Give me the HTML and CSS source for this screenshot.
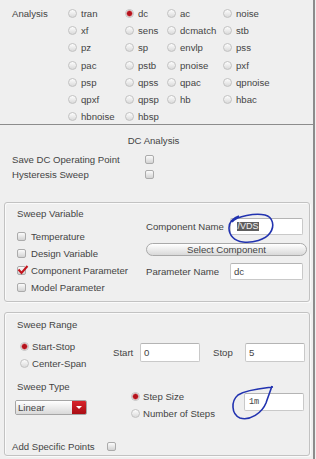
FILE: index.html
```html
<!DOCTYPE html>
<html>
<head>
<meta charset="utf-8">
<link rel="stylesheet" href="styles.css">
</head>
<body>
<div class="frame">
  <section class="analysis">
    <div class="an-label">Analysis</div>
    <label class="opt"><span class="radio"></span>tran</label>
    <label class="opt"><span class="radio on"></span>dc</label>
    <label class="opt"><span class="radio"></span>ac</label>
    <label class="opt"><span class="radio"></span>noise</label>
    <label class="opt"><span class="radio"></span>xf</label>
    <label class="opt"><span class="radio"></span>sens</label>
    <label class="opt"><span class="radio"></span>dcmatch</label>
    <label class="opt"><span class="radio"></span>stb</label>
    <label class="opt"><span class="radio"></span>pz</label>
    <label class="opt"><span class="radio"></span>sp</label>
    <label class="opt"><span class="radio"></span>envlp</label>
    <label class="opt"><span class="radio"></span>pss</label>
    <label class="opt"><span class="radio"></span>pac</label>
    <label class="opt"><span class="radio"></span>pstb</label>
    <label class="opt"><span class="radio"></span>pnoise</label>
    <label class="opt"><span class="radio"></span>pxf</label>
    <label class="opt"><span class="radio"></span>psp</label>
    <label class="opt"><span class="radio"></span>qpss</label>
    <label class="opt"><span class="radio"></span>qpac</label>
    <label class="opt"><span class="radio"></span>qpnoise</label>
    <label class="opt"><span class="radio"></span>qpxf</label>
    <label class="opt"><span class="radio"></span>qpsp</label>
    <label class="opt"><span class="radio"></span>hb</label>
    <label class="opt"><span class="radio"></span>hbac</label>
    <label class="opt"><span class="radio"></span>hbnoise</label>
    <label class="opt"><span class="radio"></span>hbsp</label>
  </section>
  <div class="sep"></div>

  <section class="dc">
    <div class="dc-title">DC Analysis</div>
    <div class="dc-opts">
      <span>Save DC Operating Point</span><span class="check"></span>
      <span>Hysteresis Sweep</span><span class="check"></span>
    </div>
  </section>

  <section class="group sv">
    <div class="sv-left">
      <div class="g-title">Sweep Variable</div>
      <div class="checks">
        <div class="crow"><span class="check"></span>Temperature</div>
        <div class="crow"><span class="check"></span>Design Variable</div>
        <div class="crow"><span class="check on"><svg class="tick" width="12" height="10" viewBox="0 0 12 10"><path d="M1.5 4.5 L4.5 8 L10.5 1" fill="none" stroke="#c3141d" stroke-width="2"/></svg></span>Component Parameter</div>
        <div class="crow"><span class="check"></span>Model Parameter</div>
      </div>
    </div>
    <div class="sv-right">
      <div class="frow">
        <span class="flabel">Component Name</span>
        <div class="input wide"><span class="sel">/VDS</span></div>
      </div>
      <div class="button">Select Component</div>
      <div class="frow param">
        <span class="flabel">Parameter Name</span>
        <div class="input wide">dc</div>
      </div>
    </div>
  </section>

  <section class="group sr">
    <div class="g-title">Sweep Range</div>
    <div class="sr-row">
      <div class="sr-radios">
        <div class="rrow"><span class="radio on"></span>Start-Stop</div>
        <div class="rrow"><span class="radio"></span>Center-Span</div>
      </div>
      <div class="range">
        <span class="lbl-start">Start</span>
        <div class="input sm">0</div>
        <span class="lbl-stop">Stop</span>
        <div class="input sm">5</div>
      </div>
    </div>
    <div class="st-row">
      <div class="st-left">
        <div class="g-title">Sweep Type</div>
        <div class="dd"><span class="dd-text">Linear</span><span class="dd-btn"></span></div>
      </div>
      <div class="st-radios">
        <div class="rrow"><span class="radio on"></span>Step Size</div>
        <div class="rrow"><span class="radio"></span>Number of Steps</div>
      </div>
      <div class="input step"><span class="mono">1m</span></div>
    </div>
    <div class="asp">
      <span>Add Specific Points</span><span class="check"></span>
    </div>
  </section>

  <svg class="marks" width="316" height="459" viewBox="0 0 316 459">
    <path d="M232 222 C237 216, 255 213, 265 215 C273 217, 275 226, 270 233 C265 240, 253 243, 243 242 C234 241, 229 235, 229 228 C229 222, 233 218, 239 216" fill="none" stroke="#2233b0" stroke-width="1.6"/>
    <path d="M273 387 C266 388, 248 389, 238 395 C231 401, 231 414, 240 418 C250 421, 262 413, 266 403 C268 397, 270 392, 272 386" fill="none" stroke="#2233b0" stroke-width="1.6"/>
  </svg>
</div>
</body>
</html>
```

FILE: styles.css
```css
* { box-sizing: border-box; margin: 0; padding: 0; }
html, body { width: 316px; height: 459px; overflow: hidden; }
body {
  background: #efefef;
  font-family: "Liberation Sans", Arial, sans-serif;
  font-size: 9.6px;
  color: #444444;
}
.frame {
  position: relative;
  width: 315px;
  height: 459px;
  border-right: 2px solid #8c8c8c;
}

/* Analysis radio grid */
.analysis {
  height: 124px;
  padding: 4.5px 0 0 12px;
  display: grid;
  grid-template-columns: 56px 57px 42px 56px auto;
  grid-auto-rows: 17.3px;
}
.an-label { grid-row: span 7; line-height: 17.3px; align-self: start; }
.opt { display: flex; align-items: center; white-space: nowrap; }
.radio {
  flex: none;
  width: 9px;
  height: 9px;
  border-radius: 50%;
  border: 1px solid #c2c2c2;
  background: linear-gradient(#fdfdfd, #dadada);
  margin-right: 4px;
}
.radio.on {
  background: radial-gradient(circle at 50% 50%, #b5121c 0, #b5121c 2px, #d77a7f 2.8px, #f4f4f4 3.6px);
}
.sep { border-top: 1px solid #8c8c8c; }

/* DC */
.dc { padding-top: 8px; }
.dc-title { text-align: center; padding-right: 6px; line-height: 15px; }
.dc-opts {
  margin-top: 3.5px;
  padding-left: 12px;
  display: grid;
  grid-template-columns: 133px 10px;
  grid-auto-rows: 15px;
  align-items: center;
}
.check {
  position: relative;
  flex: none;
  width: 9px;
  height: 9px;
  border: 1px solid #ababab;
  border-radius: 2px;
  background: linear-gradient(#fbfbfb, #d3d3d3);
}
.tick { position: absolute; left: -1px; top: -2px; }

/* group boxes */
.group {
  margin-left: 4px;
  width: 306px;
  border: 1px solid #c2c2c2;
  border-radius: 3px;
  box-shadow: inset 1px 1px 0 #fafafa, 1px 1px 0 #fafafa;
}
.g-title { line-height: 17px; }
.sv {
  margin-top: 20.5px;
  height: 100px;
  padding: 2px 0 0 12px;
  display: grid;
  grid-template-columns: 129px 1fr;
  align-items: start;
}
.checks { margin-top: 5.5px; }
.crow { display: flex; align-items: center; height: 17px; white-space: nowrap; }
.crow .check { margin-right: 5px; }
.sv-right { padding-top: 13px; }
.frow { display: flex; align-items: center; }
.flabel { width: 84px; white-space: nowrap; }
.input {
  background: #fff;
  border: 1px solid #c9c9c9;
  border-top-color: #b4b4b4;
  border-radius: 2px;
  padding-left: 3px;
  display: flex;
  align-items: center;
}
.input.wide { width: 73px; height: 17px; }
.sel { background: #5e5e5e; color: #f0f0f0; font-size: 9px; line-height: 9px; margin-left: 3px; padding: 0 0.5px; }
.button {
  margin-top: 8px;
  width: 161px;
  height: 13px;
  border: 1px solid #a9a9a9;
  border-radius: 7px;
  background: linear-gradient(#ffffff, #d9d9d9);
  display: flex;
  align-items: center;
  justify-content: center;
  line-height: 11px;
}
.frow.param { margin-top: 7px; }

.sr {
  margin-top: 10px;
  height: 144px;
  padding: 2.5px 0 0 12px;
}
.sr-row { margin-top: 5px; display: flex; align-items: flex-start; }
.sr-radios { width: 96px; }
.rrow { height: 17px; display: flex; align-items: center; white-space: nowrap; }
.sr-radios .radio { margin-left: 3px; margin-right: 3px; }
.range { margin-top: 5.5px; height: 19px; display: flex; align-items: center; }
.lbl-start { width: 27px; }
.lbl-stop { margin-left: 13px; width: 32px; }
.input.sm { width: 60px; height: 19px; }

.st-row { margin-top: 6px; display: flex; align-items: flex-start; }
.st-left { width: 114px; }
.dd {
  margin: 5.5px 0 0 -2px;
  width: 72px;
  height: 15px;
  display: flex;
  border: 1px solid #a5a5a5;
  border-radius: 2px;
  overflow: hidden;
}
.dd-text { flex: 1; background: linear-gradient(#ffffff, #d9d9d9); padding-left: 2px; line-height: 13px; }
.dd-btn {
  width: 14px;
  background: linear-gradient(#d8242b, #a90d14);
  display: flex;
  align-items: center;
  justify-content: center;
}
.dd-btn::before {
  content: "";
  border-left: 3px solid transparent;
  border-right: 3px solid transparent;
  border-top: 3px solid #fff;
}
.st-radios { margin-top: 10px; width: 113px; }
.st-radios .radio { margin-right: 3px; }
.input.step { margin-top: 15.5px; width: 60px; height: 18px; padding-left: 4px; }
.mono { font-family: "Liberation Mono", monospace; font-size: 8.5px; color: #444; }

.asp {
  margin: 16px 0 0 -5px;
  height: 17px;
  display: grid;
  grid-template-columns: 95px 9px;
  align-items: center;
}

.marks { position: absolute; left: 0; top: 0; pointer-events: none; }
```
